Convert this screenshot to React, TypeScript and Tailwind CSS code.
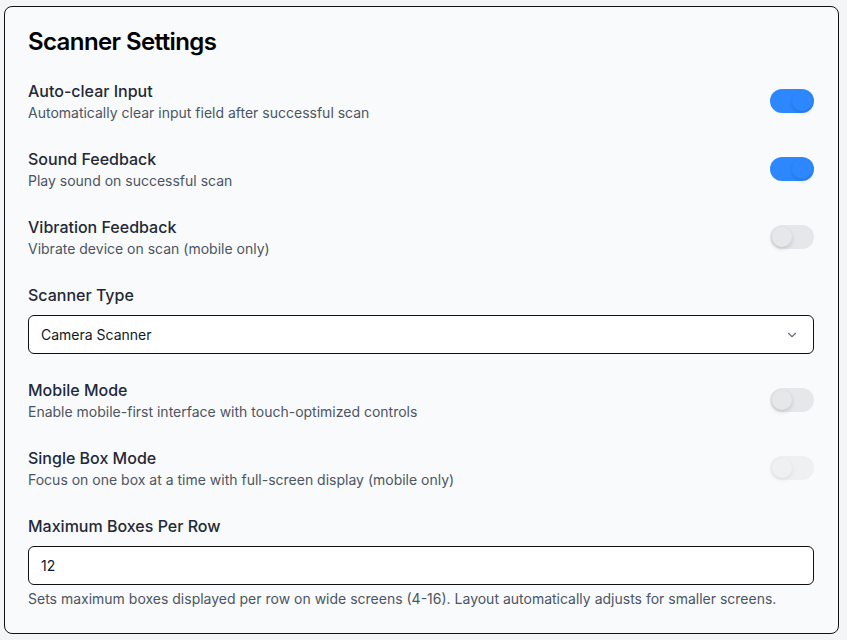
import React from "react";

function Toggle({ on, disabled }: { on: boolean; disabled?: boolean }) {
  return (
    <div
      className={`relative w-[44px] h-[24px] rounded-full shrink-0 ${
        on ? "bg-[#2d88ff]" : "bg-[#e5e7eb]"
      } ${disabled ? "opacity-50" : ""}`}
    >
      <div
        className={`absolute top-[2px] w-[20px] h-[20px] rounded-full shadow-[0_2px_4px_rgba(0,0,0,0.15)] ${
          on ? "right-[2px] bg-[#2d88ff]" : "left-[2px] bg-[#e5e7eb]"
        }`}
      />
    </div>
  );
}

function Row({
  title,
  desc,
  on,
  disabled,
}: {
  title: string;
  desc: string;
  on: boolean;
  disabled?: boolean;
}) {
  return (
    <div className="flex items-center justify-between">
      <div className="flex flex-col">
        <div className="text-[16px] leading-6 font-medium text-[#1f2937]">{title}</div>
        <div className="text-[14px] leading-5 text-[#4b5563]">{desc}</div>
      </div>
      <Toggle on={on} disabled={disabled} />
    </div>
  );
}

export default function App() {
  return (
    <div
      className="min-h-[640px] w-[847px] bg-[#f4f5f7] pt-[6px] pl-[4px]"
      style={{ fontFamily: "Inter, 'Noto Sans', sans-serif" }}
    >
      <div className="w-[835px] h-[628px] rounded-[8px] border border-[#111111] bg-[#f9fafb] pl-[23px] pr-[24px] pt-[19px] pb-[23px]">
        <h2 className="text-[24px] leading-8 font-semibold tracking-tight text-black mb-[21px]">Scanner Settings</h2>
        <div className="flex flex-col gap-6">
          <Row title="Auto-clear Input" desc="Automatically clear input field after successful scan" on />
          <Row title="Sound Feedback" desc="Play sound on successful scan" on />
          <Row title="Vibration Feedback" desc="Vibrate device on scan (mobile only)" on={false} />
          <div className="flex flex-col">
            <div className="text-[16px] leading-6 font-medium text-[#1f2937]">Scanner Type</div>
            <div className="mt-2 h-[39px] rounded-[6px] border border-[#111111] bg-white flex items-center justify-between pl-[12px] pr-[14px]">
              <span className="text-[14px] text-[#111827]">Camera Scanner</span>
              <svg width="14" height="14" viewBox="0 0 24 24" fill="none" stroke="#6b7280" strokeWidth="2" strokeLinecap="round" strokeLinejoin="round">
                <path d="M6 9l6 6 6-6" />
              </svg>
            </div>
          </div>
          <Row title="Mobile Mode" desc="Enable mobile-first interface with touch-optimized controls" on={false} />
          <Row title="Single Box Mode" desc="Focus on one box at a time with full-screen display (mobile only)" on={false} disabled />
          <div className="flex flex-col">
            <div className="text-[16px] leading-6 font-medium text-[#1f2937]">Maximum Boxes Per Row</div>
            <div className="mt-2 h-[39px] rounded-[6px] border border-[#111111] bg-white flex items-center pl-[12px]">
              <span className="text-[14px] text-[#111827]">12</span>
            </div>
            <div className="mt-1 text-[14px] leading-5 text-[#4b5563]">
              Sets maximum boxes displayed per row on wide screens (4-16). Layout automatically adjusts for smaller screens.
            </div>
          </div>
        </div>
      </div>
    </div>
  );
}
